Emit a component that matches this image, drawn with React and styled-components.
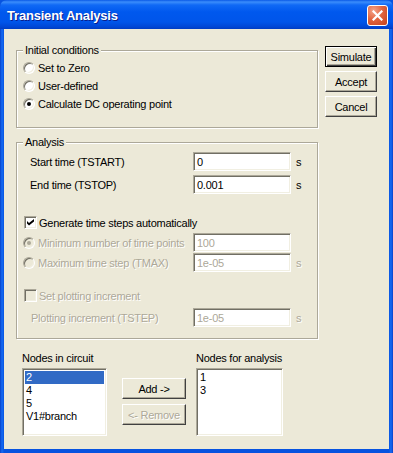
import React from "react";
import styled, { createGlobalStyle, css } from "styled-components";

const GlobalStyle = createGlobalStyle`
  html, body {
    margin: 0;
    padding: 0;
    background: #0753e0;
  }
  body {
    font-family: "Liberation Sans", Arial, sans-serif;
    font-size: 11px;
    letter-spacing: -0.25px;
    color: #000;
  }
`;

const sunken = css`
  box-sizing: border-box;
  border: 1px solid;
  border-color: #aca899 #fff #fff #aca899;
  box-shadow: inset 1px 1px 0 #716f64, inset -1px -1px 0 #f1efe2;
`;

const disabledText = css`
  color: #aca899;
  text-shadow: 1px 1px 0 #fff;
`;

const Window = styled.div`
  width: 393px;
  height: 453px;
  box-sizing: border-box;
  display: flex;
  flex-direction: column;
  background: linear-gradient(to right, #0840c8 0, #166cf4 2px, #0753e0 4px, #0753e0 389px, #166cf4 391px, #0840c8 393px);
  padding: 0 4px 4px;
  border-radius: 7px 7px 0 0;
  overflow: hidden;
`;

const TitleBar = styled.div`
  height: 29px;
  margin: 0 -4px;
  display: flex;
  align-items: center;
  justify-content: space-between;
  padding: 0 5px 0 7px;
  background: linear-gradient(
    to bottom,
    #0a5ae6 0,
    #3b8dfb 2px,
    #1069f5 5px,
    #0058ee 12px,
    #0055ea 22px,
    #0046d4 27px,
    #003cc2 29px
  );
`;

const Title = styled.span`
  color: #fff;
  font-family: "Liberation Sans", Arial, sans-serif;
  font-weight: bold;
  font-size: 13px;
  letter-spacing: -0.2px;
  text-shadow: 1px 1px 0 #0a1e8c;
  margin-top: 1px;
`;

const CloseButton = styled.div`
  width: 21px;
  height: 21px;
  box-sizing: border-box;
  border: 1px solid #fff;
  border-radius: 3px;
  background: radial-gradient(circle at 30% 25%, #f4a48a 0, #e2653f 45%, #c4401b 100%);
  display: flex;
  align-items: center;
  justify-content: center;
  margin-top: 1px;
`;

const Client = styled.div`
  flex: 1;
  background: #ece9d8;
  padding: 15px 12px 0;
  display: flex;
  flex-direction: column;
`;

const TopArea = styled.div`
  display: flex;
  align-items: flex-start;
`;

const LeftCol = styled.div`
  width: 302px;
  display: flex;
  flex-direction: column;
  gap: 8px;
`;

const Group = styled.fieldset`
  margin: 0;
  padding: 0 0 ${(p) => p.$bottom}px;
  min-inline-size: 0;
  border: 1px solid #aca899;
  box-shadow: inset 1px 1px 0 #fff, 1px 1px 0 #fff;
  display: flex;
  flex-direction: column;
`;

const Legend = styled.legend`
  margin-left: 6px;
  padding: 0 2px;
  line-height: 13px;
  background: #ece9d8;
`;

const Spacer = styled.div`
  height: ${(p) => p.$h}px;
`;

const ButtonCol = styled.div`
  margin-left: 7px;
  margin-top: 2px;
  display: flex;
  flex-direction: column;
  gap: 4px;
`;

const Button = styled.div`
  width: ${(p) => p.$width}px;
  height: 21px;
  box-sizing: border-box;
  display: flex;
  align-items: center;
  justify-content: center;
  background: #ece9d8;
  border: 1px solid;
  border-color: ${(p) => (p.$default ? "#000" : "#fff #404040 #404040 #fff")};
  box-shadow: ${(p) =>
    p.$default
      ? "inset 1px 1px 0 #fff, inset -1px -1px 0 #404040, inset -2px -2px 0 #aca899"
      : "inset -1px -1px 0 #aca899"};
  ${(p) => p.$disabled && disabledText}
`;

const RadioRow = styled.div`
  height: 18px;
  display: flex;
  align-items: center;
  padding-left: 6px;
  gap: 3px;
  ${(p) => p.$disabled && disabledText}
`;

const Radio = styled.span`
  width: 12px;
  height: 12px;
  border-radius: 50%;
  ${sunken};
  background: ${(p) => (p.$disabled ? "#ece9d8" : "#fff")};
  display: flex;
  align-items: center;
  justify-content: center;
  text-shadow: none;
  &::after {
    content: "";
    width: 4px;
    height: 4px;
    border-radius: 50%;
    background: ${(p) => (p.$disabled ? "#aca899" : "#000")};
    display: ${(p) => (p.$checked ? "block" : "none")};
  }
`;

const FieldRow = styled.div`
  display: grid;
  grid-template-columns: 176px 98px auto;
  align-items: center;
  height: 19px;
  margin-top: ${(p) => p.$top}px;
  ${(p) => p.$disabled && disabledText}
`;

const FieldLabel = styled.span`
  padding-left: ${(p) => p.$indent}px;
`;

const RadioLabel = styled.span`
  display: flex;
  align-items: center;
  gap: 3px;
  padding-left: 6px;
`;

const Input = styled.div`
  height: 19px;
  ${sunken};
  background: #fff;
  padding: 0 3px;
  display: flex;
  align-items: center;
  text-shadow: none;
  color: ${(p) => (p.$disabled ? "#aca899" : "#000")};
`;

const Unit = styled.span`
  padding-left: 5px;
`;

const CheckRow = styled.div`
  height: 13px;
  display: flex;
  align-items: center;
  gap: 2px;
  padding-left: 7px;
  margin-top: ${(p) => p.$top}px;
  ${(p) => p.$disabled && disabledText}
`;

const CheckBox = styled.span`
  width: 13px;
  height: 13px;
  ${sunken};
  background: ${(p) => (p.$disabled ? "#ece9d8" : "#fff")};
  display: flex;
  align-items: center;
  justify-content: center;
`;

const NodesArea = styled.div`
  display: flex;
  align-items: flex-start;
  margin: 13px 0 0 6px;
`;

const ListCol = styled.div`
  display: flex;
  flex-direction: column;
  gap: 3px;
  margin-left: ${(p) => p.$left || 0}px;
`;

const ListLabel = styled.span`
  line-height: 13px;
  white-space: nowrap;
`;

const ListBox = styled.div`
  width: ${(p) => p.$width}px;
  height: 68px;
  ${sunken};
  background: #fff;
  padding: 2px;
  display: flex;
  flex-direction: column;
`;

const ListItem = styled.div`
  line-height: 13px;
  padding-left: 1px;
  background: ${(p) => (p.$selected ? "#316ac5" : "transparent")};
  color: ${(p) => (p.$selected ? "#fff" : "#000")};
`;

const MoveButtons = styled.div`
  display: flex;
  flex-direction: column;
  gap: 5px;
  margin: 26px 0 0 15px;
`;

function CheckMark({ color }) {
  return (
    <svg width="7" height="7" viewBox="0 0 7 7">
      <path d="M0 2 L2 4 L7 0 L7 2.5 L2 6.5 L0 4.5 Z" fill={color} />
    </svg>
  );
}

export default function App() {
  return (
    <>
      <GlobalStyle />
      <Window>
        <TitleBar>
          <Title>Transient Analysis</Title>
          <CloseButton>
            <svg width="11" height="11" viewBox="0 0 11 11">
              <path d="M1.5 1.5 L9.5 9.5 M9.5 1.5 L1.5 9.5" stroke="#fff" strokeWidth="2.2" strokeLinecap="square" />
            </svg>
          </CloseButton>
        </TitleBar>
        <Client>
          <TopArea>
            <LeftCol>
              <Group $bottom={14}>
                <Legend>Initial conditions</Legend>
                <Spacer $h={2} />
                <RadioRow>
                  <Radio />
                  <span>Set to Zero</span>
                </RadioRow>
                <RadioRow>
                  <Radio />
                  <span>User-defined</span>
                </RadioRow>
                <RadioRow>
                  <Radio $checked />
                  <span>Calculate DC operating point</span>
                </RadioRow>
              </Group>

              <Group $bottom={11}>
                <Legend>Analysis</Legend>
                <FieldRow $top={3}>
                  <FieldLabel $indent={13}>Start time (TSTART)</FieldLabel>
                  <Input>0</Input>
                  <Unit>s</Unit>
                </FieldRow>
                <FieldRow $top={4}>
                  <FieldLabel $indent={13}>End time (TSTOP)</FieldLabel>
                  <Input>0.001</Input>
                  <Unit>s</Unit>
                </FieldRow>
                <CheckRow $top={22}>
                  <CheckBox>
                    <CheckMark color="#000" />
                  </CheckBox>
                  <span>Generate time steps automatically</span>
                </CheckRow>
                <FieldRow $top={4} $disabled>
                  <RadioLabel>
                    <Radio $checked $disabled />
                    <span>Minimum number of time points</span>
                  </RadioLabel>
                  <Input $disabled>100</Input>
                  <span />
                </FieldRow>
                <FieldRow $top={1} $disabled>
                  <RadioLabel>
                    <Radio $disabled />
                    <span>Maximum time step (TMAX)</span>
                  </RadioLabel>
                  <Input $disabled>1e-05</Input>
                  <Unit>s</Unit>
                </FieldRow>
                <CheckRow $top={17} $disabled>
                  <CheckBox $disabled />
                  <span>Set plotting increment</span>
                </CheckRow>
                <FieldRow $top={6} $disabled>
                  <FieldLabel $indent={14}>Plotting increment (TSTEP)</FieldLabel>
                  <Input $disabled>1e-05</Input>
                  <Unit>s</Unit>
                </FieldRow>
              </Group>
            </LeftCol>

            <ButtonCol>
              <Button $width={52} $default>Simulate</Button>
              <Button $width={52}>Accept</Button>
              <Button $width={52}>Cancel</Button>
            </ButtonCol>
          </TopArea>

          <NodesArea>
            <ListCol>
              <ListLabel>Nodes in circuit</ListLabel>
              <ListBox $width={85}>
                <ListItem $selected>2</ListItem>
                <ListItem>4</ListItem>
                <ListItem>5</ListItem>
                <ListItem>V1#branch</ListItem>
              </ListBox>
            </ListCol>
            <MoveButtons>
              <Button $width={64}>Add -&gt;</Button>
              <Button $width={64} $disabled>&lt;- Remove</Button>
            </MoveButtons>
            <ListCol $left={10}>
              <ListLabel>Nodes for analysis</ListLabel>
              <ListBox $width={87}>
                <ListItem>1</ListItem>
                <ListItem>3</ListItem>
              </ListBox>
            </ListCol>
          </NodesArea>
        </Client>
      </Window>
    </>
  );
}
